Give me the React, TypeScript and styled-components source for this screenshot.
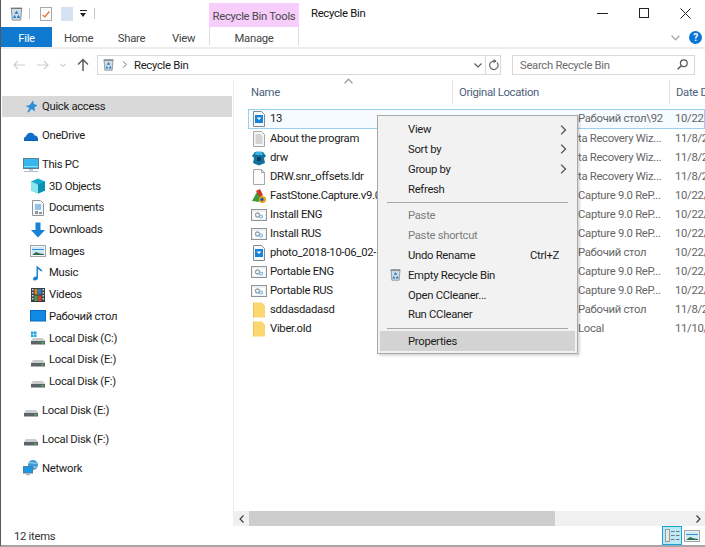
import React from "react";
import styled, { createGlobalStyle } from "styled-components";

const Global = createGlobalStyle`
  html, body { margin: 0; padding: 0; background: #fff; }
  body { font-family: Roboto, "Open Sans", "Liberation Sans", sans-serif; font-size: 11.3px; letter-spacing: -0.3px; color: #1c1c1c; }
`;

/* ---- icons ---- */
const Svg = ({ s = 16, children }: { s?: number; children: React.ReactNode }) => (
  <svg width={s} height={s} viewBox="0 0 16 16" style={{ display: "block", flex: "none" }}>
    {children}
  </svg>
);

const BinIcon = ({ s = 16 }: { s?: number }) => (
  <Svg s={s}>
    <path d="M2.5 2.5h11l-1 12.5h-9z" fill="#d5dade" stroke="#838d95" />
    <path d="M2 2.5h12" stroke="#6f7a82" strokeWidth="1.4" />
    <path d="M8 5l2.2 3.2H5.8z" fill="#0f7fdc" />
    <path d="M4.3 12.8l1.7-3.4 1.7 3.4zM8.3 12.8l1.8-3.4 1.8 3.4z" fill="#0f7fdc" />
  </Svg>
);
const StarIcon = () => (
  <Svg>
    <path d="M10 1.5l1 3.5 3.5 1.2-3 2.2.4 4-3.3-2.4-3 3.5-1.2-.8L6.4 9 2.5 7l4.3-1z" fill="#2b8fdc" />
  </Svg>
);
const CloudIcon = () => (
  <Svg>
    <path d="M1 12c-.6-2 .5-3.400 2-3.600C3.600 6 6 4.200 8.500 4.800c1.700.4 2.600 1.400 3 2.700 2.200-.2 3.900 1.600 3.500 4.500z" fill="#0f6fc6" />
    <path d="M1 12.500h14" stroke="#0a5fb0" />
  </Svg>
);
const PcIcon = () => (
  <Svg>
    <rect x=".5" y="1.500" width="15" height="10" fill="#35b8f0" stroke="#607d8b" />
    <path d="M1 9.500h14" stroke="#8fdcfa" />
    <path d="M6 12h4v1.500H6zM1 14h14v1H1z" fill="#b5bcc2" />
  </Svg>
);
const CubeIcon = () => (
  <Svg>
    <path d="M8 .5l7 3v9l-7 3-7-3v-9z" fill="#17a9c9" />
    <path d="M1 3.500l7 3v9l-7-3z" fill="#8ce6ee" />
    <path d="M8 6.500l7-3v9l-7 3z" fill="#0e8fb4" />
  </Svg>
);
const DocsIcon = () => (
  <Svg>
    <path d="M2.500.5h8l3 3v12h-11z" fill="#f4f6f8" stroke="#8d959b" />
    <path d="M5 5h6M5 7h6M5 9h6" stroke="#2d8fdc" />
    <path d="M5 11h3v3H5zM9 12h3v2H9z" fill="#8d959b" />
  </Svg>
);
const DownIcon = () => (
  <Svg>
    <path d="M5.500.5h5V8H15l-7 7.500L1 8h4.500z" fill="#1683d8" />
  </Svg>
);
const ImagesIcon = () => (
  <Svg>
    <rect x=".5" y="2.500" width="15" height="11" fill="#f2f4f5" stroke="#9aa3aa" />
    <rect x="2" y="4" width="12" height="8" fill="#cfe9f5" />
    <path d="M2 6h12v1H2z" fill="#2d8fdc" />
    <path d="M2 12l4-3 4 1.500 4 .5v1z" fill="#2f6b4f" />
  </Svg>
);
const MusicIcon = () => (
  <Svg>
    <path d="M6.500.5l6 5-1 1-3.500-2.500V12.500c0 1.700-1.500 3-3.300 3-1.200 0-1.700-.8-1.700-1.600 0-1.600 2-2.700 3.500-2.200z" fill="#1683d8" />
  </Svg>
);
const FilmIcon = () => (
  <Svg>
    <rect x="1" y="1" width="14" height="14" fill="#3a3f44" />
    <path d="M2 2h1.500v1.500H2zM2 5h1.500v1.500H2zM2 8h1.500v1.500H2zM2 11h1.500v1.500H2zM12.500 2H14v1.500h-1.500zM12.500 5H14v1.500h-1.500zM12.500 8H14v1.500h-1.500zM12.500 11H14v1.500h-1.500z" fill="#d8dadc" />
    <rect x="4.500" y="2" width="3" height="5.500" fill="#d9822b" />
    <rect x="8" y="2" width="3.500" height="5.500" fill="#2d7fc4" />
    <rect x="4.500" y="8.500" width="3" height="5.500" fill="#4d9a52" />
    <rect x="8" y="8.500" width="3.500" height="5.500" fill="#c8452f" />
  </Svg>
);
const DesktopIcon = () => (
  <Svg>
    <rect x=".5" y="2.500" width="15" height="10.500" fill="#1088e4" stroke="#0a6cc0" />
  </Svg>
);
const DiskIcon = ({ win }: { win?: boolean }) => (
  <Svg>
    <path d="M3 8h10l2 3H1z" fill="#c9cdd0" />
    <rect x="1" y="11" width="14" height="3.500" fill="#5c6266" />
    <rect x="11.500" y="12" width="2" height="1.500" fill="#3fd04f" />
    {win && <path d="M1 1.500h2.500V4H1zM4 1.500h2.500V4H4zM1 4.500h2.500V7H1zM4 4.500h2.500V7H4z" fill="#19a7e8" />}
  </Svg>
);
const NetIcon = () => (
  <Svg>
    <circle cx="10" cy="5" r="5" fill="#3f9ad6" />
    <path d="M6 3c3-1 5 1 8 0M7 7c3-1 4 1 7 0" stroke="#a9dcf5" fill="none" />
    <rect x=".5" y="6.500" width="9" height="6.500" fill="#1a97e6" stroke="#5e7d92" />
    <path d="M3 14h4v1.200H3z" fill="#a9b2b8" />
  </Svg>
);
const ImageFileIcon = () => (
  <Svg>
    <path d="M2.500.5h8l3 3v12h-11z" fill="#f6f8fa" stroke="#7f8a92" />
    <rect x="4" y="4" width="8" height="8" fill="#1683d8" />
    <path d="M5.500 6.500h5l-2.500 2.500z" fill="#fff" />
  </Svg>
);
const TextFileIcon = () => (
  <Svg>
    <path d="M2.500.5h8l3 3v12h-11z" fill="#f6f6f6" stroke="#a8a8a8" />
    <path d="M4.500 4h6M4.500 6h7M4.500 8h7M4.500 10h7M4.500 12h7" stroke="#b0b0b0" />
  </Svg>
);
const BlankFileIcon = () => (
  <Svg>
    <path d="M2.500.5h8l3 3v12h-11z" fill="#fbfbfb" stroke="#a8a8a8" />
    <path d="M10.500.5v3h3" fill="none" stroke="#a8a8a8" />
  </Svg>
);
const DrwIcon = () => (
  <Svg>
    <path d="M1 6l3-4h8l3 4-2 2 1 5-6 2.500L2 13l1-5z" fill="#12719e" />
    <path d="M5 1.500h6l1 3.500H4z" fill="#39b5e0" />
    <rect x="6" y="7" width="4" height="4" fill="#0b3f63" />
  </Svg>
);
const FastStoneIcon = () => (
  <Svg>
    <path d="M1 13L7 2l4 6-3 6z" fill="#3f9a3d" />
    <path d="M5 3l4-2 3 6-3 2z" fill="#d6352b" />
    <circle cx="11.500" cy="11.500" r="3.500" fill="#e8a317" />
    <circle cx="11" cy="11.500" r="1.700" fill="#2356b0" />
  </Svg>
);
const SetupIcon = () => (
  <Svg>
    <rect x=".5" y="2.500" width="15" height="11" fill="#eef0f2" stroke="#8d959b" />
    <rect x="2" y="5" width="12" height="7" fill="#fff" />
    <circle cx="6.500" cy="8" r="2" fill="none" stroke="#9aa3aa" strokeWidth="1.300" />
    <circle cx="10" cy="9.500" r="1.500" fill="none" stroke="#6fb4de" strokeWidth="1.200" />
  </Svg>
);
const FolderIcon = () => (
  <Svg>
    <path d="M2 .5h9l3 3v12H2z" fill="#fbd76f" />
    <path d="M2 .5h1V15.500H2z" fill="#eec04f" />
  </Svg>
);
const Chevron = ({ d, c = "#555", s = 8 }: { d: string; c?: string; s?: number }) => (
  <svg width={s} height={s} viewBox="0 0 8 8" style={{ display: "block", flex: "none" }}>
    <path d={d} fill="none" stroke={c} strokeWidth="1.100" />
  </svg>
);

/* ---- data ---- */
const nav = [
  { label: "Quick access", icon: <StarIcon />, active: true },
  { label: "OneDrive", icon: <CloudIcon />, gap: true },
  { label: "This PC", icon: <PcIcon />, gap: true },
  { label: "3D Objects", icon: <CubeIcon />, sub: true },
  { label: "Documents", icon: <DocsIcon />, sub: true },
  { label: "Downloads", icon: <DownIcon />, sub: true },
  { label: "Images", icon: <ImagesIcon />, sub: true },
  { label: "Music", icon: <MusicIcon />, sub: true },
  { label: "Videos", icon: <FilmIcon />, sub: true },
  { label: "Рабочий стол", icon: <DesktopIcon />, sub: true },
  { label: "Local Disk (C:)", icon: <DiskIcon win />, sub: true },
  { label: "Local Disk (E:)", icon: <DiskIcon />, sub: true },
  { label: "Local Disk (F:)", icon: <DiskIcon />, sub: true },
  { label: "Local Disk (E:)", icon: <DiskIcon />, gap: true },
  { label: "Local Disk (F:)", icon: <DiskIcon />, gap: true },
  { label: "Network", icon: <NetIcon />, gap: true },
];

const capture = "Capture 9.0 ReP...";
const wiz = "ta Recovery Wiz...";
const files = [
  { name: "13", icon: <ImageFileIcon />, loc: "Рабочий стол\\92", date: "10/22/2018", selected: true },
  { name: "About the program", icon: <TextFileIcon />, loc: wiz, date: "11/8/2018" },
  { name: "drw", icon: <DrwIcon />, loc: wiz, date: "11/8/2018" },
  { name: "DRW.snr_offsets.ldr", icon: <BlankFileIcon />, loc: wiz, date: "11/8/2018" },
  { name: "FastStone.Capture.v9.0", icon: <FastStoneIcon />, loc: capture, date: "10/22/2018" },
  { name: "Install ENG", icon: <SetupIcon />, loc: capture, date: "10/22/2018" },
  { name: "Install RUS", icon: <SetupIcon />, loc: capture, date: "10/22/2018" },
  { name: "photo_2018-10-06_02-13", icon: <ImageFileIcon />, loc: "Рабочий стол", date: "10/22/2018" },
  { name: "Portable ENG", icon: <SetupIcon />, loc: capture, date: "10/22/2018" },
  { name: "Portable RUS", icon: <SetupIcon />, loc: capture, date: "10/22/2018" },
  { name: "sddasdadasd", icon: <FolderIcon />, loc: "Рабочий стол", date: "11/8/2018" },
  { name: "Viber.old", icon: <FolderIcon />, loc: "Local", date: "11/10/2018" },
];

const right = "M2.500 .5l3.500 3.500-3.500 3.500";

const App = () => {
  return (
    <Win>
      <Global />
      <TitleBar>
        <Quick>
          <BinIcon s={15} />
          <QuickSep />
          <TaskDoc>
            <svg width="10" height="10" viewBox="0 0 12 12">
              <path d="M2 7l2.500 2.500L10 3" fill="none" stroke="#e8672c" strokeWidth="1.500" />
            </svg>
          </TaskDoc>
          <PaleDoc />
          <DropMark />
          <QuickSep />
        </Quick>
        <ToolsTab>Recycle Bin Tools</ToolsTab>
        <Title>Recycle Bin</Title>
        <Controls>
          <Ctl>
            <svg width="11" height="11" viewBox="0 0 11 11"><path d="M0 5.500h11" stroke="#222" /></svg>
          </Ctl>
          <Ctl>
            <svg width="10" height="10" viewBox="0 0 10 10"><rect x=".5" y=".5" width="9" height="9" fill="none" stroke="#222" /></svg>
          </Ctl>
          <Ctl>
            <svg width="11" height="11" viewBox="0 0 11 11"><path d="M.5.500l10 10M10.500.5l-10 10" stroke="#222" /></svg>
          </Ctl>
        </Controls>
      </TitleBar>

      <TabBar>
        <FileTab>File</FileTab>
        <Tab $w={53}>Home</Tab>
        <Tab $w={53}>Share</Tab>
        <Tab $w={51}>View</Tab>
        <ManageTab>Manage</ManageTab>
        <TabRight>
          <Chevron d="M.5 2.500l3.500 3.500 3.500-3.500" c="#a8a8a8" s={9} />
          <Help>?</Help>
        </TabRight>
      </TabBar>

      <AddressRow>
        <NavBtn $w={22}>
          <svg width="12" height="10" viewBox="0 0 12 10"><path d="M12 5H1M5 1L1 5l4 4" fill="none" stroke="#cfcfcf" strokeWidth="1.200" /></svg>
        </NavBtn>
        <NavBtn $w={26}>
          <svg width="12" height="10" viewBox="0 0 12 10"><path d="M0 5h11M7 1l4 4-4 4" fill="none" stroke="#cfcfcf" strokeWidth="1.200" /></svg>
        </NavBtn>
        <NavBtn $w={14}>
          <Chevron d="M1.500 3l2.500 2.500L6.500 3" c="#cfcfcf" />
        </NavBtn>
        <NavBtn $w={25}>
          <svg width="12" height="13" viewBox="0 0 12 13"><path d="M6 13V1.500M1 6.500l5-5 5 5" fill="none" stroke="#5f5f5f" strokeWidth="1.500" /></svg>
        </NavBtn>
        <AddressBox>
          <BinIcon s={13} />
          <Chevron d={right} c="#666" s={7} />
          <Crumb>Recycle Bin</Crumb>
          <Chevron d="M.5 2.500l3.500 3.500 3.500-3.500" c="#555" />
        </AddressBox>
        <RefreshBox>
          <svg width="11" height="12" viewBox="0 0 11 12">
            <path d="M9 3.500a4.200 4.200 0 1 1-3-1.400H8" fill="none" stroke="#666" strokeWidth="1.200" />
            <path d="M5.500 0l3 2.100-3 2.100z" fill="#666" />
          </svg>
        </RefreshBox>
        <SearchBox>
          <SearchText>Search Recycle Bin</SearchText>
          <svg width="11" height="11" viewBox="0 0 11 11">
            <circle cx="6.800" cy="4.200" r="3.400" fill="none" stroke="#555" strokeWidth="1.200" />
            <path d="M4.300 6.700L.7 10.300" stroke="#555" strokeWidth="1.500" />
          </svg>
        </SearchBox>
      </AddressRow>

      <Body>
        <Sidebar>
          {nav.map((n, i) => (
            <NavRow key={i} $active={n.active} $gap={n.gap} $sub={n.sub}>
              {n.icon}
              <span>{n.label}</span>
            </NavRow>
          ))}
        </Sidebar>

        <Content>
          <HeaderRow>
            <NameHead>Name</NameHead>
            <LocationHead>Original Location</LocationHead>
            <DateHead>Date Deleted</DateHead>
            <SortMark>
              <Chevron d="M.5 5.500L4 2l3.500 3.500" c="#9a9a9a" s={9} />
            </SortMark>
          </HeaderRow>
          <List>
            {files.map((f) => (
              <FileRow key={f.name} $selected={f.selected}>
                <NameCell>
                  {f.icon}
                  <span>{f.name}</span>
                </NameCell>
                <LocCell>{f.loc}</LocCell>
                <DateCell>{f.date}</DateCell>
              </FileRow>
            ))}
          </List>
          <ScrollBar>
            <ScrollBtn>
              <Chevron d="M5.500 .5L2 4l3.500 3.500" c="#333" />
            </ScrollBtn>
            <Thumb />
            <ScrollRest />
            <ScrollBtn>
              <Chevron d={right} c="#333" />
            </ScrollBtn>
          </ScrollBar>
        </Content>
      </Body>

      <StatusBar>
        <StatusText>12 items</StatusText>
        <Views>
          <ViewBtn $on>
            <svg width="15" height="13" viewBox="0 0 15 13">
              <rect x=".5" y=".5" width="4" height="12" fill="#e8e8e8" stroke="#999" />
              <path d="M6 2.500h3.500M11 2.500h3.500M6 6.500h3.500M11 6.500h3.500M6 10.500h3.500M11 10.500h3.500" stroke="#777" />
            </svg>
          </ViewBtn>
          <ViewBtn>
            <ImagesIcon />
          </ViewBtn>
        </Views>
      </StatusBar>

      <Menu>
        <MenuItem>View<MenuArrow><Chevron d={right} c="#555" s={10} /></MenuArrow></MenuItem>
        <MenuItem>Sort by<MenuArrow><Chevron d={right} c="#555" s={10} /></MenuArrow></MenuItem>
        <MenuItem>Group by<MenuArrow><Chevron d={right} c="#555" s={10} /></MenuArrow></MenuItem>
        <MenuItem>Refresh</MenuItem>
        <MenuSep />
        <MenuItem $off>Paste</MenuItem>
        <MenuItem $off>Paste shortcut</MenuItem>
        <MenuItem>Undo Rename<Shortcut>Ctrl+Z</Shortcut></MenuItem>
        <MenuItem><MenuIcon><BinIcon s={13} /></MenuIcon>Empty Recycle Bin</MenuItem>
        <MenuItem>Open CCleaner...</MenuItem>
        <MenuItem>Run CCleaner</MenuItem>
        <MenuSep />
        <MenuItem $hot>Properties</MenuItem>
      </Menu>
    </Win>
  );
};
export default App;

const Win = styled.div`
  position: relative;
  box-sizing: border-box;
  width: 705px;
  height: 547px;
  display: flex;
  flex-direction: column;
  overflow: hidden;
  background: #fff;
  border-left: 1px solid #5a5a5a;
  border-bottom: 2px solid #a6a6a6;
`;
const TitleBar = styled.div`
  display: flex;
  align-items: flex-end;
  height: 27px;
  flex: none;
`;
const Quick = styled.div`
  display: flex;
  align-items: center;
  align-self: center;
  width: 208px;
  padding-left: 8px;
  box-sizing: border-box;
  height: 27px;
`;
const QuickSep = styled.div`
  width: 1px;
  height: 11px;
  margin: 0 10px 0 5px;
  background: #c4c4c4;
`;
const TaskDoc = styled.div`
  display: flex;
  align-items: center;
  justify-content: center;
  box-sizing: border-box;
  width: 12px;
  height: 14px;
  border: 1px solid #a9a9a9;
  background: #fbfbfb;
  margin-right: 9px;
`;
const PaleDoc = styled.div`
  width: 12px;
  height: 14px;
  background: #d6e2f2;
  margin-right: 7px;
`;
const DropMark = styled.div`
  width: 7px;
  height: 6px;
  margin-right: 2px;
  border-top: 1px solid #222;
  position: relative;
  &::after {
    content: "";
    position: absolute;
    left: 0;
    top: 2px;
    border: 3.5px solid transparent;
    border-top: 4px solid #222;
    border-bottom: 0;
  }
`;
const ToolsTab = styled.div`
  display: flex;
  align-items: center;
  justify-content: center;
  box-sizing: border-box;
  width: 90px;
  height: 24px;
  padding-top: 2px;
  background: #f7cdfb;
  color: #4a4a4a;
  white-space: nowrap;
`;
const Title = styled.div`
  align-self: center;
  margin-left: 12px;
  flex: 1;
  color: #111;
`;
const Controls = styled.div`
  display: flex;
  align-self: center;
`;
const Ctl = styled.div`
  display: flex;
  justify-content: center;
  width: 41.5px;
  position: relative;
  left: 1px;
`;
const TabBar = styled.div`
  display: flex;
  align-items: stretch;
  box-sizing: border-box;
  height: 22px;
  flex: none;
  border-bottom: 2px solid #ececec;
`;
const FileTab = styled.div`
  display: flex;
  align-items: center;
  justify-content: center;
  box-sizing: border-box;
  width: 51px;
  padding-top: 2px;
  background: #0f78cf;
  color: #fff;
`;
const Tab = styled.div<{ $w: number }>`
  display: flex;
  align-items: center;
  justify-content: center;
  box-sizing: border-box;
  width: ${(p) => p.$w}px;
  padding-top: 2px;
  color: #444;
`;
const ManageTab = styled.div`
  display: flex;
  align-items: center;
  justify-content: center;
  width: 90px;
  height: 18px;
  padding-top: 4px;
  color: #444;
  border-left: 1px solid #dcdcdc;
  border-right: 1px solid #dcdcdc;
  box-sizing: border-box;
`;
const TabRight = styled.div`
  display: flex;
  align-items: center;
  justify-content: flex-end;
  gap: 9px;
  flex: 1;
  padding-right: 3px;
`;
const Help = styled.div`
  display: flex;
  align-items: center;
  justify-content: center;
  width: 13px;
  height: 13px;
  border-radius: 50%;
  background: #0a74d6;
  color: #fff;
  font-size: 10px;
  font-weight: 700;
`;
const AddressRow = styled.div`
  display: flex;
  align-items: center;
  height: 31px;
  flex: none;
  padding-left: 7px;
  box-sizing: border-box;
`;
const NavBtn = styled.div<{ $w: number }>`
  display: flex;
  align-items: center;
  justify-content: center;
  width: ${(p) => p.$w}px;
`;
const AddressBox = styled.div`
  display: flex;
  align-items: center;
  gap: 6px;
  box-sizing: border-box;
  width: 389px;
  height: 20px;
  margin-left: 2px;
  padding: 0 3px 0 4px;
  border: 1px solid #d9d9d9;
`;
const Crumb = styled.span`
  flex: 1;
  padding-top: 1px;
`;
const RefreshBox = styled.div`
  display: flex;
  align-items: center;
  justify-content: center;
  box-sizing: border-box;
  width: 16px;
  height: 20px;
  border: 1px solid #d9d9d9;
  margin-left: -1px;
`;
const SearchBox = styled.div`
  display: flex;
  align-items: center;
  justify-content: space-between;
  box-sizing: border-box;
  width: 183px;
  height: 20px;
  margin-left: 11px;
  padding: 0 6px 0 7px;
  border: 1px solid #d9d9d9;
  color: #6d6d6d;
`;
const SearchText = styled.span`
  padding-top: 1px;
`;
const Body = styled.div`
  display: flex;
  flex: 1;
  min-height: 0;
`;
const Sidebar = styled.div`
  width: 233px;
  flex: none;
  box-sizing: border-box;
  padding: 15.7px 1px 0 1px;
  border-right: 1px solid #eeeeee;
`;
const NavRow = styled.div<{ $active?: boolean; $gap?: boolean; $sub?: boolean }>`
  display: flex;
  align-items: center;
  gap: 3px;
  height: 21.7px;
  padding-left: ${(p) => (p.$sub ? 28 : 21)}px;
  margin-top: ${(p) => (p.$gap ? 7.3 : 0)}px;
  background: ${(p) => (p.$active ? "#d9d9d9" : "transparent")};
`;
const Content = styled.div`
  position: relative;
  flex: 1;
  min-width: 0;
  display: flex;
  flex-direction: column;
`;
const HeaderRow = styled.div`
  display: flex;
  height: 25px;
  flex: none;
  padding-left: 17px;
  color: #4c607a;
`;
const NameHead = styled.div`
  display: flex;
  align-items: center;
  width: 201px;
  height: 24px;
  flex: none;
`;
const LocationHead = styled.div`
  display: flex;
  align-items: center;
  box-sizing: border-box;
  width: 217px;
  height: 24px;
  flex: none;
  padding-left: 6px;
  border-left: 1px solid #e5e5e5;
`;
const DateHead = styled(LocationHead)`
  flex: 1;
  min-width: 0;
  white-space: nowrap;
  overflow: hidden;
`;
const SortMark = styled.div`
  position: absolute;
  left: 110px;
  top: -3px;
`;
const List = styled.div`
  flex: 1;
  min-height: 0;
  padding: 4px 0 0 14px;
`;
const FileRow = styled.div<{ $selected?: boolean }>`
  display: flex;
  align-items: center;
  box-sizing: border-box;
  height: ${(p) => (p.$selected ? 20 : 19)}px;
  padding-bottom: ${(p) => (p.$selected ? 1 : 0)}px;
  margin-left: ${(p) => (p.$selected ? 0 : 1)}px;
  border: ${(p) => (p.$selected ? "1px solid #99d1f0" : "0")};
  background: ${(p) => (p.$selected ? "#f5fbff" : "transparent")};
`;
const NameCell = styled.div`
  display: flex;
  align-items: center;
  gap: 3px;
  width: 210px;
  padding-left: 2px;
  box-sizing: border-box;
  flex: none;
  white-space: nowrap;
  overflow: hidden;
`;
const LocCell = styled.div`
  width: 216px;
  padding-left: 119px;
  box-sizing: border-box;
  flex: none;
  color: #666;
  white-space: nowrap;
  overflow: hidden;
`;
const DateCell = styled.div`
  flex: 1;
  min-width: 0;
  color: #666;
  white-space: nowrap;
  overflow: hidden;
`;
const ScrollBar = styled.div`
  display: flex;
  height: 15px;
  flex: none;
  background: #f0f0f0;
`;
const ScrollBtn = styled.div`
  display: flex;
  align-items: center;
  justify-content: center;
  width: 15px;
  flex: none;
`;
const Thumb = styled.div`
  width: 306px;
  flex: none;
  background: #cdcdcd;
`;
const ScrollRest = styled.div`
  flex: 1;
`;
const StatusBar = styled.div`
  display: flex;
  align-items: center;
  justify-content: space-between;
  height: 19px;
  flex: none;
  padding: 0 5px 0 13px;
  color: #333;
`;
const StatusText = styled.span`
  padding-top: 2px;
`;
const Views = styled.div`
  display: flex;
  align-items: center;
  gap: 2px;
`;
const ViewBtn = styled.div<{ $on?: boolean }>`
  display: flex;
  align-items: center;
  justify-content: center;
  box-sizing: border-box;
  width: ${(p) => (p.$on ? 20 : 16)}px;
  height: 19px;
  border: ${(p) => (p.$on ? "1px solid #0fa5d6" : "0")};
  background: ${(p) => (p.$on ? "#bde8f6" : "transparent")};
`;
const Menu = styled.div`
  position: absolute;
  left: 376px;
  top: 115px;
  box-sizing: border-box;
  width: 201px;
  height: 239px;
  padding: 3.5px 2px 2px;
  background: #f2f2f2;
  border: 1px solid #a8a8a8;
  box-shadow: 2px 2px 2px rgba(0, 0, 0, 0.15);
`;
const MenuItem = styled.div<{ $off?: boolean; $hot?: boolean }>`
  position: relative;
  display: flex;
  align-items: center;
  height: 19.9px;
  padding-left: 28px;
  color: ${(p) => (p.$off ? "#7d7d7d" : "#1c1c1c")};
  background: ${(p) => (p.$hot ? "#d3d3d3" : "transparent")};
`;
const MenuArrow = styled.div`
  position: absolute;
  right: 7px;
  top: 5px;
`;
const Shortcut = styled.span`
  position: absolute;
  right: 16px;
`;
const MenuIcon = styled.div`
  position: absolute;
  left: 9px;
  top: 3px;
`;
const MenuSep = styled.div`
  height: 1px;
  margin: 2.75px 7px;
  background: #a8a8a8;
`;
